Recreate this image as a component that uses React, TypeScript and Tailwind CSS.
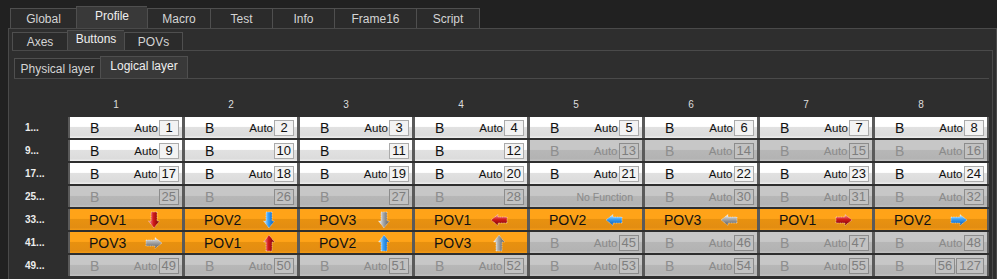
import React from "react";

type Dir = "up" | "down" | "left" | "right";
type Col = "red" | "blue" | "gray";
type CellT =
  | { k: "w" | "d"; b?: boolean; auto?: boolean; n: number[] }
  | { k: "o"; pov: string; dir: Dir; color: Col }
  | { k: "nf" };

const rng = (a: number, b: number, kind: "w" | "d", auto = true): CellT[] =>
  Array.from({ length: b - a + 1 }, (_, i) => ({ k: kind, b: true, auto, n: [a + i] }));

const rows: { label: string; cells: CellT[] }[] = [
  { label: "1...", cells: rng(1, 8, "w") },
  {
    label: "9...",
    cells: [
      { k: "w", b: true, auto: true, n: [9] },
      { k: "w", b: true, auto: false, n: [10] },
      { k: "w", b: true, auto: false, n: [11] },
      { k: "w", b: true, auto: false, n: [12] },
      ...rng(13, 16, "d"),
    ],
  },
  { label: "17...", cells: rng(17, 24, "w") },
  { label: "25...", cells: [...rng(25, 28, "d", false), { k: "nf" }, ...rng(30, 32, "d")] },
  {
    label: "33...",
    cells: [
      { k: "o", pov: "POV1", dir: "down", color: "red" },
      { k: "o", pov: "POV2", dir: "down", color: "blue" },
      { k: "o", pov: "POV3", dir: "down", color: "gray" },
      { k: "o", pov: "POV1", dir: "left", color: "red" },
      { k: "o", pov: "POV2", dir: "left", color: "blue" },
      { k: "o", pov: "POV3", dir: "left", color: "gray" },
      { k: "o", pov: "POV1", dir: "right", color: "red" },
      { k: "o", pov: "POV2", dir: "right", color: "blue" },
    ],
  },
  {
    label: "41...",
    cells: [
      { k: "o", pov: "POV3", dir: "right", color: "gray" },
      { k: "o", pov: "POV1", dir: "up", color: "red" },
      { k: "o", pov: "POV2", dir: "up", color: "blue" },
      { k: "o", pov: "POV3", dir: "up", color: "gray" },
      ...rng(45, 48, "d"),
    ],
  },
  { label: "49...", cells: [...rng(49, 55, "d"), { k: "d", b: true, auto: false, n: [56, 127] }] },
];

const grads: Record<Col, [string, string, string]> = {
  red: ["#ff9c9c", "#d01a1a", "#780000"],
  blue: ["#d2f0ff", "#3a9ef2", "#0a58ac"],
  gray: ["#f8f8f8", "#a6a6a6", "#5a5a5a"],
};

const basePts: [number, number][] = [
  [1, 6],
  [10, 6],
  [10, 3.5],
  [17, 9],
  [10, 14.5],
  [10, 12],
  [1, 12],
];

function Arrow({ dir, color }: { dir: Dir; color: Col }) {
  const deg = { right: 0, down: 90, left: 180, up: 270 }[dir];
  const r = (deg * Math.PI) / 180;
  const cos = Math.round(Math.cos(r));
  const sin = Math.round(Math.sin(r));
  const pts = basePts
    .map(([x, y]) => {
      const dx = x - 9;
      const dy = y - 9;
      return `${9 + dx * cos - dy * sin},${9 + dx * sin + dy * cos}`;
    })
    .join(" ");
  const c = grads[color];
  const vert = dir === "up" || dir === "down";
  const id = `ag-${color}-${vert ? "v" : "h"}`;
  return (
    <svg width="18" height="18" viewBox="0 0 18 18" className="block">
      <defs>
        <linearGradient id={id} x1="0" y1="0" x2={vert ? "1" : "0"} y2={vert ? "0" : "1"}>
          <stop offset="0" stopColor={c[0]} />
          <stop offset="0.45" stopColor={c[1]} />
          <stop offset="1" stopColor={c[2]} />
        </linearGradient>
      </defs>
      <polygon
        points={pts}
        fill={`url(#${id})`}
        stroke="#ffffff"
        strokeWidth="0.7"
        strokeOpacity="0.7"
        strokeDasharray="1 0.7"
      />
    </svg>
  );
}

const bgW =
  "bg-[linear-gradient(180deg,#ffffff_0%,#ffffff_45%,#e1e1e1_48%,#dcdcdc_88%,#eeeeee_100%)]";
const bgD =
  "bg-[linear-gradient(180deg,#c7c7c7_0%,#c7c7c7_45%,#b7b7b7_48%,#b3b3b3_88%,#c1c1c1_100%)]";
const bgO =
  "bg-[linear-gradient(180deg,#ffa318_0%,#ffa318_45%,#e8910f_48%,#e38d12_88%,#f39a15_100%)]";

function Cell({ c }: { c: CellT }) {
  if (c.k === "o") {
    return (
      <div className={`w-[112px] h-[21px] flex items-center ${bgO}`}>
        <span className="ml-[19px] w-[55px] text-[14px] leading-[16px] text-[#111]">{c.pov}</span>
        <span className="ml-[1px]">
          <Arrow dir={c.dir} color={c.color} />
        </span>
      </div>
    );
  }
  if (c.k === "nf") {
    return (
      <div className={`w-[112px] h-[21px] flex items-center justify-end pr-[9px] ${bgD}`}>
        <span className="text-[10.5px] leading-[12px] text-[#8a8a8a]">No Function</span>
      </div>
    );
  }
  const dis = c.k === "d";
  return (
    <div className={`w-[112px] h-[21px] flex items-center ${dis ? bgD : bgW}`}>
      <span
        className={`ml-[20px] text-[14px] leading-[16px] ${dis ? "text-[#8e8e8e]" : "text-[#111]"}`}
      >
        {c.b ? "B" : ""}
      </span>
      <span className="flex-1" />
      {c.auto && (
        <span className={`text-[11.5px] leading-[14px] ${dis ? "text-[#8a8a8a]" : "text-[#111]"}`}>
          Auto
        </span>
      )}
      {c.n.map((n, i) => (
        <span
          key={i}
          className={`h-[16px] min-w-[20px] px-[2px] ml-[1px] border text-center text-[13px] leading-[14px] ${
            dis
              ? "border-[#8c8c8c] text-[#7e7e7e] bg-[#c2c2c2]"
              : "border-[#ababab] text-[#111] bg-[#f3f3f3]"
          }`}
        >
          {n}
        </span>
      ))}
      <span className="w-[3px]" />
    </div>
  );
}

function Tab({
  label,
  w,
  sel,
  h,
  hs,
  last,
}: {
  label: string;
  w: number;
  sel?: boolean;
  h: number;
  hs: number;
  last?: boolean;
}) {
  return (
    <div
      style={{ width: w, height: sel ? hs : h }}
      className={`flex items-center justify-center border-t border-l border-[#4f4f4f] ${
        last ? "border-r" : ""
      } ${sel ? "bg-[#393939] text-[#eeeeee] pb-[4px]" : "bg-[#2b2b2b] text-[#d4d4d4] pt-[1px]"}`}
    >
      {label}
    </div>
  );
}

export default function App() {
  return (
    <div className="w-[997px] h-[279px] overflow-hidden bg-[#212121] flex flex-col text-[12px] font-['Liberation_Sans',Arial,sans-serif]">
      {/* top tabs */}
      <div className="h-[28px] flex items-end pl-[10px] shrink-0">
        <Tab label="Global" w={66} h={20} hs={22} />
        <Tab label="Profile" w={71} h={20} hs={22} sel />
        <Tab label="Macro" w={63} h={20} hs={22} />
        <Tab label="Test" w={62} h={20} hs={22} />
        <Tab label="Info" w={62} h={20} hs={22} />
        <Tab label="Frame16" w={82} h={20} hs={22} />
        <Tab label="Script" w={64} h={20} hs={22} last />
      </div>
      {/* main panel */}
      <div className="flex-1 ml-[8px] border-t border-l border-r border-[#4a4a4a] bg-[#2e2e2e] flex flex-col min-h-0">
        <div className="h-[21px] flex items-end pl-[3px] shrink-0">
          <Tab label="Axes" w={55} h={18} hs={20} />
          <Tab label="Buttons" w={57} h={18} hs={20} sel />
          <Tab label="POVs" w={59} h={18} hs={20} last />
        </div>
        {/* group */}
        <div className="flex-1 ml-[3px] mr-[3px] border-t border-r border-[#4a4a4a] flex flex-col min-h-0">
          <div className="h-[27px] flex items-end pl-[2px] shrink-0">
            <Tab label="Physical layer" w={86} h={20} hs={22} />
            <Tab label="Logical layer" w={88} h={22} hs={22} sel last />
          </div>
          <div className="flex-1 ml-[2px] mr-[3px] border-t border-[#4a4a4a] pt-[19px]">
            {/* header */}
            <div className="flex h-[14px] items-center">
              <div className="w-[56px]" />
              <div className="flex gap-[3px]">
                {[1, 2, 3, 4, 5, 6, 7, 8].map((n) => (
                  <div
                    key={n}
                    className="w-[112px] pr-[20px] text-center text-[10px] leading-[14px] text-[#dedede]"
                  >
                    {n}
                  </div>
                ))}
              </div>
            </div>
            <div className="mt-[5px] flex flex-col gap-[2px]">
              {rows.map((r) => (
                <div key={r.label} className="flex h-[21px]">
                  <div className="w-[54px] pl-[11px] flex items-center text-[10px] font-bold text-[#ececec]">
                    {r.label}
                  </div>
                  <div className="flex gap-[3px] bg-[#5a5a5a] px-[2px]">
                    {r.cells.map((c, i) => (
                      <Cell key={i} c={c} />
                    ))}
                  </div>
                </div>
              ))}
            </div>
          </div>
        </div>
      </div>
    </div>
  );
}
